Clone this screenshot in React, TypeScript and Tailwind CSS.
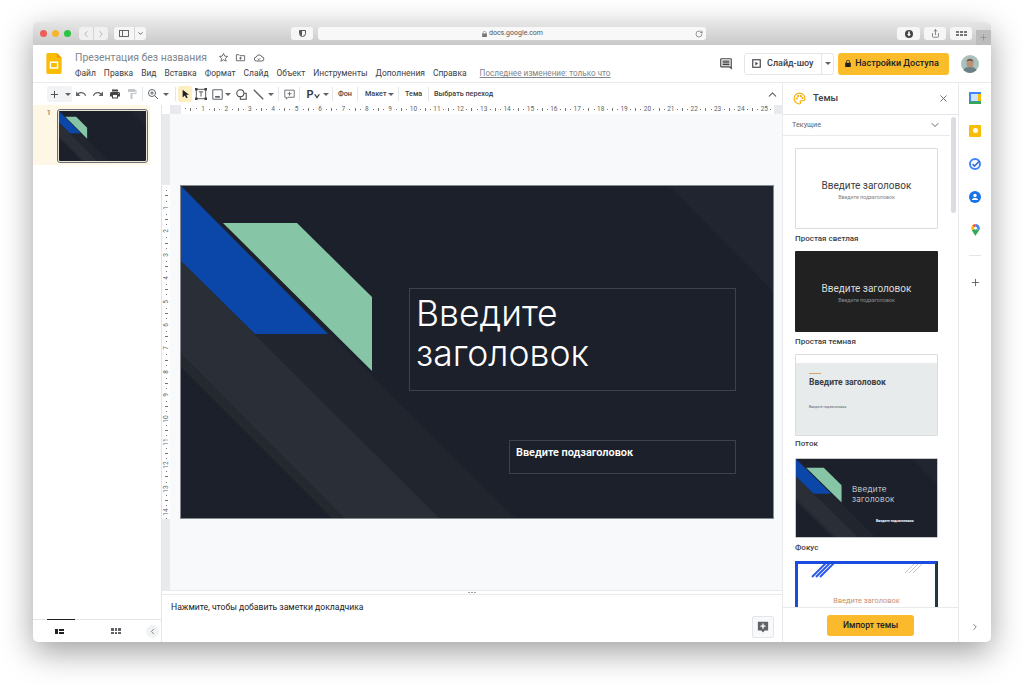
import { ChevronDown, ChevronLeft, ChevronRight, ChevronUp, Plus, RotateCw, Share, X } from 'lucide-react';

const rulerH = Array.from({ length: 25 }, (_, i) => i + 1);
const rulerV = Array.from({ length: 14 }, (_, i) => i + 1);
const menu = ['Файл', 'Правка', 'Вид', 'Вставка', 'Формат', 'Слайд', 'Объект', 'Инструменты', 'Дополнения', 'Справка'];

function Caret({ className = '' }: { className?: string }) {
  return (
    <svg viewBox="0 0 8 4" className={`h-[3px] w-[6px] shrink-0 text-[#5f6368] ${className}`} fill="currentColor">
      <path d="M0 0h8L4 4z" />
    </svg>
  );
}

function Sep({ className = '' }: { className?: string }) {
  return <div className={`h-[14px] w-px shrink-0 bg-[#e3e5e8] ${className}`} />;
}

function Mi({ d, className = '' }: { d: string; className?: string }) {
  return (
    <svg viewBox="0 0 24 24" className={`h-[12px] w-[12px] text-[#5f6368] ${className}`} fill="currentColor">
      <path d={d} />
    </svg>
  );
}

function SlideArt() {
  return (
    <svg viewBox="0 0 594 334" preserveAspectRatio="none" className="block h-full w-full">
      <rect width="594" height="334" fill="#1b202b" />
      <polygon points="488,0 594,0 594,107" fill="#21252f" />
      <polygon points="0,0 336,334 153,334 0,181" fill="#21252e" />
      <polygon points="0,75 260,334 165,334 0,168" fill="#2a2e37" />
      <polygon points="0,168 165,334 153,334 0,181" fill="#24282f" />
      <polygon points="0,0 148,149 75,149 0,75" fill="#0b47a8" />
      <polygon points="43,38 117,38 192,112 192,186" fill="#86c6a6" />
    </svg>
  );
}

function ThemeLabel({ children, className = '' }: { children: string; className?: string }) {
  return <div className={`h-[14px] text-[8px] leading-[14px] font-medium text-[#3c4043] ${className}`}>{children}</div>;
}

function AppTile({ children }: { children: React.ReactNode }) {
  return <div className="flex h-[33px] w-full shrink-0 items-center justify-center">{children}</div>;
}

export default function App() {
  return (
    <div className="h-[686px] w-[1024px] overflow-hidden bg-white pt-[22px] pl-[33px] font-['Roboto',sans-serif]">
      <div className="flex h-[620px] w-[958px] flex-col overflow-hidden rounded-[5px] bg-white shadow-[0_10px_32px_rgba(0,0,0,0.38)]">
        {/* safari bar */}
        <div className="flex h-[23px] shrink-0 items-center bg-gradient-to-b from-[#e6e6e6] to-[#c9c9c9] pl-[7px]">
          <div className="flex gap-[5px]">
            <div className="h-[7px] w-[7px] rounded-full bg-[#ee5f57]" />
            <div className="h-[7px] w-[7px] rounded-full bg-[#f7b52f]" />
            <div className="h-[7px] w-[7px] rounded-full bg-[#2bc33f]" />
          </div>
          <div className="ml-[8px] flex h-[13px] w-[29px] rounded-[3px] bg-[#f0f0f0] text-[#a9a9a9]">
            <div className="flex flex-1 items-center justify-center border-r border-[#d5d5d5]">
              <ChevronLeft size={10} />
            </div>
            <div className="flex flex-1 items-center justify-center">
              <ChevronRight size={10} />
            </div>
          </div>
          <div className="ml-[6px] flex h-[13px] w-[32px] rounded-[3px] bg-[#f6f6f6]">
            <div className="flex w-[21px] items-center justify-center border-r border-[#d5d5d5]">
              <div className="flex h-[7px] w-[10px] border border-[#666]">
                <div className="w-[3px] border-r border-[#666]" />
              </div>
            </div>
            <div className="flex flex-1 items-center justify-center text-[#555]">
              <ChevronDown size={7} strokeWidth={3} />
            </div>
          </div>
          <div className="ml-[145px] flex h-[13px] w-[22px] items-center justify-center rounded-[3px] bg-[#f6f6f6]">
            <div className="flex h-[7px] w-[7px] overflow-hidden rounded-b-full border border-[#555]">
              <div className="w-1/2 bg-[#555]" />
            </div>
          </div>
          <div className="ml-[5px] flex h-[13px] w-[388px] items-center rounded-[3px] bg-[#f8f8f8] pr-[3px] text-[#666]">
            <div className="flex flex-1 items-center justify-center gap-[2px] pl-[12px] text-[7px] text-[#555]">
              <svg viewBox="0 0 8 10" className="h-[6px] w-[5px]" fill="#777">
                <path d="M1 4V3a3 3 0 0 1 6 0v1h1v6H0V4zm1 0h4V3a2 2 0 0 0-4 0z" />
              </svg>
              <span>docs.google.com</span>
            </div>
            <RotateCw size={8} />
          </div>
          <div className="ml-[191px] flex h-[13px] w-[23px] items-center justify-center rounded-[3px] bg-[#f6f6f6]">
            <svg viewBox="0 0 10 10" className="h-[8px] w-[8px]">
              <circle cx="5" cy="5" r="5" fill="#444" />
              <path d="M4 2h2v3h1.5L5 8 2.5 5H4z" fill="#fff" />
            </svg>
          </div>
          <div className="ml-[4px] flex h-[13px] w-[22px] items-center justify-center rounded-[3px] bg-[#f6f6f6] text-[#666]">
            <Share size={9} />
          </div>
          <div className="ml-[4px] flex h-[13px] w-[22px] items-center justify-center rounded-[3px] bg-[#f6f6f6]">
            <div className="grid grid-cols-3 gap-px">
              {[0, 1, 2, 3, 4, 5].map((i) => (
                <div key={i} className="h-[2px] w-[3px] border-[0.5px] border-[#777]" />
              ))}
            </div>
          </div>
          <div className="mt-[8px] ml-[4px] flex h-[15px] flex-1 items-center justify-center bg-[#bdbdbd] text-[#8c8c8c]">
            <Plus size={9} />
          </div>
        </div>

        {/* docs header */}
        <div className="flex h-[38px] shrink-0 border-b border-[#e8eaed] bg-white">
          <div className="ml-[13px] pt-[8px]">
            <svg viewBox="0 0 16 22" className="h-[21px] w-[16px]">
              <path d="M1.5 0H11l5 5v15.5a1.5 1.5 0 0 1-1.5 1.5h-13A1.5 1.5 0 0 1 0 20.5v-19A1.5 1.5 0 0 1 1.5 0z" fill="#fbbc04" />
              <path d="M11 0l5 5h-5z" fill="#f29900" />
              <path d="M3.5 9h9v7.500h-9zM5 10.5V15h6v-4.500z" fill="#fff" />
            </svg>
          </div>
          <div className="ml-[13px] flex flex-col">
            <div className="mt-[5px] flex h-[15px] items-center">
              <span className="text-[10.4px] text-[#80868b]">Презентация без названия</span>
              <svg viewBox="0 0 24 24" className="ml-[11px] h-[11px] w-[11px]" fill="none" stroke="#5f6368" strokeWidth="2">
                <path d="M12 3l2.700 6 6.300.6-4.800 4.200 1.500 6.400L12 16.800 6.300 20.200l1.500-6.400L3 9.600 9.300 9z" />
              </svg>
              <svg viewBox="0 0 24 24" className="ml-[6px] h-[11px] w-[11px]" fill="none" stroke="#5f6368" strokeWidth="2">
                <path d="M3 6h6l2 2h10v11H3zM12 10.500v6M9 13.500h6" />
              </svg>
              <svg viewBox="0 0 24 24" className="ml-[7px] h-[12px] w-[12px]" fill="none" stroke="#5f6368" strokeWidth="2">
                <path d="M7 18a4 4 0 0 1-.5-8 6 6 0 0 1 11.400 0A4 4 0 0 1 17.500 18zM9.500 13.500l2 2 3-3" />
              </svg>
            </div>
            <div className="mt-[3px] flex h-[11px] items-center whitespace-nowrap text-[8.45px] text-[#3c4043]">
              {menu.map((m) => (
                <span key={m} className="mr-[8px]">
                  {m}
                </span>
              ))}
              <span className="ml-[5px] text-[8.15px] text-[#80868b] underline">Последнее изменение: только что</span>
            </div>
          </div>
          <div className="ml-auto flex items-center pr-[12px]">
            <Mi d="M21.990 4a2 2 0 0 0-2-2H4a2 2 0 0 0-2 2v12a2 2 0 0 0 2 2h14l4 4zM20 4v13.170L18.830 16H4V4zM6 12h12v2H6zm0-3h12v2H6zm0-3h12v2H6z" className="h-[14px] w-[14px] text-[#444]" />
            <div className="ml-[11px] flex h-[22px] w-[90px] rounded-[3px] border border-[#e3e5e8]">
              <div className="flex flex-1 items-center gap-[6px] pl-[7px] text-[9px] font-medium text-[#3c4043]">
                <svg viewBox="0 0 12 12" className="h-[9px] w-[9px]" fill="none" stroke="#3c4043" strokeWidth="1.5">
                  <rect x="1" y="1" width="10" height="10" />
                  <path d="M4.5 3.5L8 6 4.5 8.5z" fill="#3c4043" stroke="none" />
                </svg>
                Слайд-шоу
              </div>
              <div className="flex w-[12px] items-center justify-center border-l border-[#e3e5e8]">
                <Caret className="text-[#3c4043]" />
              </div>
            </div>
            <div className="ml-[4px] flex h-[22px] w-[111px] items-center justify-center gap-[4px] rounded-[3px] bg-[#fbbc2c] pr-[3px] text-[9px] font-medium text-[#202124]">
              <svg viewBox="0 0 8 10" className="h-[7px] w-[6px]" fill="#202124">
                <path d="M1 4V3a3 3 0 0 1 6 0v1h1v6H0V4zm1 0h4V3a2 2 0 0 0-4 0z" />
              </svg>
              Настройки Доступа
            </div>
            <div className="ml-[12px] h-[18px] w-[18px] overflow-hidden rounded-full">
              <svg viewBox="0 0 18 18" className="h-full w-full">
                <rect width="18" height="18" fill="#a9c1bc" />
                <path d="M2 18c0-5 3-6 7-6s7 1 7 6z" fill="#6b7f86" />
                <ellipse cx="9" cy="8" rx="3.5" ry="4.5" fill="#b98f76" />
                <path d="M5.5 6.5C6 3 12 3 12.500 6.500 10 5 8 5 5.500 6.500z" fill="#5b4a3e" />
              </svg>
            </div>
          </div>
        </div>

        <div className="flex min-h-0 flex-1">
          {/* left + editor */}
          <div className="flex w-[749px] shrink-0 flex-col">
            {/* toolbar */}
            <div className="flex h-[22px] shrink-0 items-center pl-[14px] text-[7.2px] font-medium text-[#3c4043]">
              <div className="flex h-[16px] w-[25px] shrink-0 items-center rounded-[2px] bg-[#f1f3f4]">
                <Plus size={11} strokeWidth={2} className="ml-[2px] text-[#444]" />
                <Caret className="ml-[5px]" />
              </div>
              <div className="flex w-[17px] justify-center">
                <Mi d="M12.500 8c-2.650 0-5.050.99-6.900 2.600L2 7v9h9l-3.620-3.620c1.390-1.160 3.160-1.880 5.120-1.880 3.540 0 6.550 2.310 7.600 5.500l2.370-.78C21.080 11.030 17.150 8 12.500 8z" />
              </div>
              <div className="flex w-[17px] justify-center">
                <Mi d="M18.400 10.600C16.550 8.990 14.150 8 11.500 8c-4.650 0-8.580 3.030-9.960 7.220L3.900 16c1.050-3.190 4.050-5.500 7.600-5.500 1.950 0 3.730.72 5.120 1.880L13 16h9V7l-3.600 3.600z" />
              </div>
              <div className="flex w-[17px] justify-center">
                <Mi d="M19 8H5c-1.660 0-3 1.340-3 3v6h4v4h12v-4h4v-6c0-1.660-1.340-3-3-3zm-3 11H8v-5h8v5zm3-7c-.55 0-1-.45-1-1s.45-1 1-1 1 .45 1 1-.45 1-1 1zm-1-9H6v4h12V3z" className="text-[#444]" />
              </div>
              <div className="flex w-[17px] justify-center">
                <Mi d="M18 4V3a1 1 0 0 0-1-1H5a1 1 0 0 0-1 1v4a1 1 0 0 0 1 1h12a1 1 0 0 0 1-1V6h1v4H9v11a1 1 0 0 0 1 1h2a1 1 0 0 0 1-1v-9h8V4z" className="text-[#c4c7c9]" />
              </div>
              <Sep className="mx-[2px]" />
              <div className="flex w-[16px] justify-center">
                <svg viewBox="0 0 24 24" className="h-[12px] w-[12px]" fill="none" stroke="#5f6368" strokeWidth="2">
                  <circle cx="10" cy="10" r="7" />
                  <path d="M15.500 15.500L22 22M10 6.500v7M6.500 10h7" />
                </svg>
              </div>
              <div className="flex w-[10px] justify-center">
                <Caret />
              </div>
              <Sep className="ml-[4px]" />
              <div className="ml-[2px] flex h-[16px] w-[14px] shrink-0 items-center justify-center rounded-[2px] bg-[#feefc3]">
                <svg viewBox="0 0 12 14" className="h-[10px] w-[9px]" fill="#202124">
                  <path d="M2 1v11l3-3 2 4 2-1-2-4h4z" />
                </svg>
              </div>
              <div className="flex w-[18px] justify-center">
                <svg viewBox="0 0 14 14" className="h-[12px] w-[12px]" fill="none" stroke="#444" strokeWidth="1">
                  <rect x="1.5" y="1.5" width="11" height="11" />
                  <path d="M4.500 4.500h5M7 4.500v5.500" />
                  <path d="M0 0h3v3H0zM11 0h3v3h-3zM0 11h3v3H0zM11 11h3v3h-3z" fill="#444" stroke="none" />
                </svg>
              </div>
              <div className="flex w-[14px] justify-center">
                <svg viewBox="0 0 14 14" className="h-[11px] w-[11px]" fill="none" stroke="#5f6368" strokeWidth="1.3">
                  <rect x="1" y="1" width="12" height="12" rx="1" />
                  <path d="M4 10h6" strokeWidth="2" />
                </svg>
              </div>
              <Caret className="ml-[1px]" />
              <div className="ml-[2px] flex w-[16px] justify-center">
                <svg viewBox="0 0 14 14" className="h-[11px] w-[11px]" fill="none" stroke="#444" strokeWidth="1.3">
                  <circle cx="5.5" cy="5.5" r="4.5" />
                  <path d="M10.500 5.500H13v7.500H5.500v-3" />
                </svg>
              </div>
              <div className="ml-[1px] flex w-[16px] justify-center">
                <svg viewBox="0 0 14 14" className="h-[11px] w-[11px]" fill="none" stroke="#5f6368" strokeWidth="1.8">
                  <path d="M1 1l12 12" />
                </svg>
              </div>
              <Caret className="ml-[2px]" />
              <Sep className="ml-[4px]" />
              <div className="ml-[2px] flex w-[16px] justify-center">
                <svg viewBox="0 0 14 14" className="h-[11px] w-[11px]" fill="none" stroke="#5f6368" strokeWidth="1.1">
                  <path d="M1 1.500h12v9H5L3 13v-2.500H1zM7 3.500v5M4.500 6h5" />
                </svg>
              </div>
              <Sep className="ml-[2px]" />
              <div className="ml-[5px] flex w-[16px] items-end justify-center">
                <span className="text-[11px] leading-none font-bold text-[#3c4043]">P</span>
                <svg viewBox="0 0 8 6" className="mb-[1px] h-[5px] w-[6px]" fill="#3c4043">
                  <path d="M0 0h2l2 3 2-3h2L4 6z" />
                </svg>
              </div>
              <Caret className="ml-[2px]" />
              <Sep className="ml-[3px]" />
              <span className="ml-[5px] w-[14px] shrink-0 whitespace-nowrap">Фон</span>
              <Sep className="ml-[5px]" />
              <span className="ml-[7px] w-[22px] shrink-0 whitespace-nowrap">Макет</span>
              <Caret className="ml-[1px]" />
              <Sep className="ml-[4px]" />
              <span className="ml-[6px] w-[17px] shrink-0 whitespace-nowrap">Тема</span>
              <Sep className="ml-[6px]" />
              <span className="ml-[5px] whitespace-nowrap">Выбрать переход</span>
              <ChevronUp size={13} strokeWidth={2} className="mr-[3px] ml-auto text-[#5f6368]" />
            </div>

            <div className="flex min-h-0 flex-1">
              {/* filmstrip */}
              <div className="flex w-[129px] shrink-0 flex-col border-r border-[#e3e5e8]">
                <div className="flex h-[60px] w-[117px] bg-[#fef7e6]">
                  <span className="mt-[2px] w-[19px] pr-[1px] text-right text-[8px] leading-[12px] text-[#5f6368]">1</span>
                  <div className="mt-[5px] ml-[6px] h-[52px] w-[89px] overflow-hidden rounded-[2px] border border-[#e7e3d5] outline outline-[#6b6f76]">
                    <SlideArt />
                  </div>
                </div>
                <div className="flex-1" />
                <div className="relative flex h-[23px] shrink-0 items-center border-t border-[#e3e5e8]">
                  <div className="absolute top-[-1px] left-[14px] h-[1px] w-[28px] bg-[#202124]" />
                  <div className="ml-[22px] flex h-[5px] w-[9px] gap-px">
                    <div className="w-[3px] bg-[#202124]" />
                    <div className="flex flex-1 flex-col gap-px">
                      <div className="flex-1 bg-[#202124]" />
                      <div className="flex-1 bg-[#202124]" />
                    </div>
                  </div>
                  <div className="ml-[47px] grid grid-cols-3 gap-px">
                    {[0, 1, 2, 3, 4, 5].map((i) => (
                      <div key={i} className="h-[2.5px] w-[2.5px] bg-[#5f6368]" />
                    ))}
                  </div>
                  <div className="ml-[25px] flex h-[13px] w-[13px] items-center justify-center rounded-full bg-[#f1f3f4] text-[#5f6368]">
                    <ChevronLeft size={9} />
                  </div>
                </div>
              </div>

              {/* editor */}
              <div className="flex min-w-0 flex-1 flex-col">
                <div className="flex h-[9px] shrink-0 bg-[#e8eaed]">
                  <div className="w-[8px] shrink-0 bg-white" />
                  <div className="ml-[11px] flex h-[9px] w-[593px] shrink-0 items-center overflow-hidden bg-white pl-[2px] text-[6.5px] leading-none text-[#5f6368]">
                    <div className="flex w-[16px] shrink-0 justify-around">
                      <div className="h-px w-px bg-[#777]" />
                      <div className="h-[3px] w-px bg-[#777]" />
                      <div className="h-px w-px bg-[#777]" />
                    </div>
                    {rulerH.map((n) => (
                      <div key={n} className="flex h-full w-[23.4px] shrink-0 items-center">
                        <span className="w-[8px] text-center">{n}</span>
                        <div className="flex flex-1 items-center justify-around">
                          <div className="h-px w-px bg-[#777]" />
                          <div className="h-[3px] w-px bg-[#777]" />
                          <div className="h-px w-px bg-[#777]" />
                        </div>
                      </div>
                    ))}
                  </div>
                </div>
                <div className="flex min-h-0 flex-1">
                  <div className="flex w-[8px] shrink-0 flex-col bg-[#e8eaed]">
                    <div className="mt-[71px] flex h-[334px] shrink-0 flex-col items-center overflow-hidden bg-white pt-[3px] text-[6.5px] leading-none text-[#5f6368]">
                      <div className="flex h-[16px] shrink-0 flex-col items-center justify-around">
                        <div className="h-px w-px bg-[#777]" />
                        <div className="h-px w-[3px] bg-[#777]" />
                        <div className="h-px w-px bg-[#777]" />
                      </div>
                      {rulerV.map((n) => (
                        <div key={n} className="flex h-[23.4px] shrink-0 flex-col items-center">
                          <span className="flex h-[8px] shrink-0 -rotate-90 items-center">{n}</span>
                          <div className="flex flex-1 flex-col items-center justify-around">
                            <div className="h-px w-px bg-[#777]" />
                            <div className="h-px w-[3px] bg-[#777]" />
                            <div className="h-px w-px bg-[#777]" />
                          </div>
                        </div>
                      ))}
                    </div>
                  </div>
                  <div className="min-w-0 flex-1 bg-[#f8f9fa] pt-[71px] pl-[10px]">
                    <div className="relative h-[334px] w-[594px]">
                      <SlideArt />
                      <div className="absolute inset-0 border border-[#85888e]" />
                      <div className="absolute top-[103px] left-[229px] h-[103px] w-[327px] border border-[#3d414c] px-[6px] pt-[5px] font-['Inter',sans-serif] text-[35.5px] leading-[40px] font-light text-white">
                        Введите
                        <br />
                        заголовок
                      </div>
                      <div className="absolute top-[255px] left-[329px] h-[34px] w-[227px] border border-[#3d414c] px-[6px] pt-[4px] text-[10.9px] leading-[16px] font-semibold text-white">
                        Введите подзаголовок
                      </div>
                    </div>
                  </div>
                </div>
                <div className="flex h-[5px] shrink-0 items-center justify-center gap-px border-y border-[#e8eaed]">
                  <div className="h-px w-[2px] bg-[#9aa0a6]" />
                  <div className="h-px w-[2px] bg-[#9aa0a6]" />
                  <div className="h-px w-[2px] bg-[#9aa0a6]" />
                </div>
                <div className="relative h-[47px] shrink-0 pt-[5px] pl-[9px] text-[8.6px] leading-[14px] text-[#202124]">
                  Нажмите, чтобы добавить заметки докладчика
                  <div className="absolute top-[21px] right-[8px] flex h-[22px] w-[22px] items-center justify-center rounded-[2px] border border-[#e3e5e8] bg-[#f8f9fa]">
                    <svg viewBox="0 0 14 14" className="h-[12px] w-[12px]" fill="#5f6368">
                      <path d="M1 1h12v10H9l-2 2.500L5 11H1z" />
                      <path d="M6.200 3h1.600v2.200H10v1.600H7.800V9H6.200V6.800H4V5.200h2.200z" fill="#fff" />
                    </svg>
                  </div>
                </div>
              </div>
            </div>
          </div>

          {/* themes panel */}
          <div className="flex w-[176px] shrink-0 flex-col border-l border-[#e8eaed]">
            <div className="flex h-[32px] shrink-0 items-center border-b border-[#e3e5e8] pr-[9px] pl-[10px]">
              <svg viewBox="0 0 24 24" className="h-[13px] w-[13px]" fill="none" stroke="#f9ab00" strokeWidth="2">
                <path d="M12 2a10 10 0 0 0 0 20c1.500 0 2-1 2-2s-1-1.500-1-2.500 1-1.500 2-1.500h3c2 0 4-1.500 4-4 0-5.500-4.500-10-10-10z" />
                <circle cx="7" cy="12" r="1" fill="#f9ab00" />
                <circle cx="9.5" cy="7.5" r="1" fill="#f9ab00" />
                <circle cx="14.5" cy="7.5" r="1" fill="#f9ab00" />
                <circle cx="17.5" cy="11" r="1" fill="#f9ab00" />
              </svg>
              <span className="ml-[7px] text-[9.5px] font-medium text-[#3c4043]">Темы</span>
              <X size={11} strokeWidth={2} className="ml-auto text-[#5f6368]" />
            </div>
            <div className="relative min-h-0 flex-1 overflow-hidden">
              <div className="mr-[8px] flex h-[21px] items-center justify-between border-b border-[#e8eaed] pr-[9px] pl-[9px] text-[7.2px] text-[#5f6368]">
                Текущие
                <ChevronDown size={12} strokeWidth={2} className="text-[#5f6368]" />
              </div>
              <div className="absolute top-[2px] right-[2px] h-[96px] w-[5px] rounded-full bg-[#dadce0]" />
              <div className="ml-[12px] w-[143px] pt-[12px]">
                <div className="flex h-[81px] flex-col items-center justify-center rounded-[1px] border border-[#dadce0] bg-white pt-[4px]">
                  <span className="text-[10px] leading-[12px] text-[#3c4043]">Введите заголовок</span>
                  <span className="mt-[1px] text-[5.3px] leading-[8px] text-[#80868b]">Введите подзаголовок</span>
                </div>
                <ThemeLabel className="mt-[3px] mb-[5px]">Простая светлая</ThemeLabel>
                <div className="flex h-[81px] flex-col items-center justify-center rounded-[1px] bg-[#212121] pt-[4px]">
                  <span className="text-[10px] leading-[12px] text-[#dcdcdc]">Введите заголовок</span>
                  <span className="mt-[1px] text-[5.3px] leading-[8px] text-[#8b8b8b]">Введите подзаголовок</span>
                </div>
                <ThemeLabel className="mt-[3px] mb-[5px]">Простая темная</ThemeLabel>
                <div className="h-[82px] overflow-hidden rounded-[1px] border border-[#dadce0] bg-[#e8ebeb] pl-[13px]">
                  <div className="-ml-[13px] h-[8px] bg-white" />
                  <div className="mt-[10px] h-px w-[12px] bg-[#d6a274]" />
                  <div className="mt-[3px] text-[8.5px] leading-[11px] font-bold text-[#3c4043]">Введите заголовок</div>
                  <div className="mt-[16px] text-[3.5px] leading-[6px] text-[#5f6368]">Введите подзаголовок</div>
                </div>
                <ThemeLabel className="mt-px mb-[7px]">Поток</ThemeLabel>
                <div className="relative h-[80px] overflow-hidden rounded-[1px] border border-[#c6c8cc]">
                  <SlideArt />
                  <div className="absolute top-[25px] left-[56px] font-['Inter',sans-serif] text-[8.2px] leading-[10px] font-light tracking-[0.3px] text-[#e8e8e8]">
                    Введите
                    <br />
                    заголовок
                  </div>
                  <div className="absolute top-[60px] left-[80px] text-[3.5px] leading-[5px] font-bold text-white">Введите подзаголовок</div>
                </div>
                <ThemeLabel className="mt-[3px] mb-[6px]">Фокус</ThemeLabel>
                <div className="relative h-[81px] overflow-hidden border-[3px] border-[#1c4be0] border-r-[#1f3a3d] bg-white">
                  <svg viewBox="0 0 143 46" className="absolute top-[-3px] left-[-3px] h-[46px] w-[143px]" fill="none">
                    <path d="M82 1.500h61" stroke="#1f3a3d" strokeWidth="3" />
                    <path d="M17 16L33 0M21 16L37 0M25 16L41 0" stroke="#2d5be8" strokeWidth="2" />
                    <path d="M110 12L122 0M114 12L126 0M118 12L130 0" stroke="#9a9a9a" strokeWidth="0.6" />
                  </svg>
                  <div className="absolute top-[31px] left-0 w-full text-center text-[7.4px] leading-[12px] text-[#c9906a]">Введите заголовок</div>
                  <div className="absolute top-[28px] right-[-3px] h-[30px] w-[3px] bg-[#b98f5f]" />
                </div>
              </div>
            </div>
            <div className="flex h-[35px] shrink-0 items-center justify-center border-t border-[#e8eaed] bg-white">
              <div className="flex h-[21px] w-[87px] items-center justify-center rounded-[3px] bg-[#fbb92c] text-[8.6px] font-medium text-[#202124]">
                Импорт темы
              </div>
            </div>
          </div>

          {/* addons rail */}
          <div className="flex w-[33px] shrink-0 flex-col items-center border-l border-[#e8eaed]">
            <div className="-mt-[2px] w-full">
              <AppTile>
                <svg viewBox="0 0 12 12" className="h-[12px] w-[12px]">
                  <rect width="12" height="12" fill="#4285f4" />
                  <rect x="2" y="2" width="7" height="7" fill="#d2e3fc" />
                  <rect x="9" y="2" width="3" height="7" fill="#fbbc04" />
                  <rect y="9.5" width="12" height="2.5" fill="#34a853" />
                </svg>
              </AppTile>
            </div>
            <AppTile>
              <div className="flex h-[12px] w-[12px] items-center justify-center rounded-[1px] bg-[#fbbc04]">
                <div className="h-[5px] w-[5px] rounded-full bg-white" />
              </div>
            </AppTile>
            <AppTile>
              <svg viewBox="0 0 12 12" className="h-[12px] w-[12px]">
                <circle cx="6" cy="6" r="5" fill="none" stroke="#4285f4" strokeWidth="2" />
                <path d="M3.5 6l2 2 5-5" fill="none" stroke="#3367d6" strokeWidth="1.6" />
              </svg>
            </AppTile>
            <AppTile>
              <svg viewBox="0 0 12 12" className="h-[12px] w-[12px]">
                <circle cx="6" cy="6" r="6" fill="#1a73e8" />
                <circle cx="6" cy="4.500" r="1.700" fill="#fff" />
                <path d="M2.800 9c.5-1.500 1.700-2 3.200-2s2.700.5 3.200 2z" fill="#fff" />
              </svg>
            </AppTile>
            <AppTile>
              <svg viewBox="0 0 10 14" className="h-[12px] w-[9px]">
                <path d="M5 0a5 5 0 0 1 5 5c0 1-.3 1.800-.8 2.500L5 4z" fill="#4285f4" />
                <path d="M5 0a5 5 0 0 0-3.800 1.800L5 5z" fill="#ea4335" />
                <path d="M1.200 1.800A5 5 0 0 0 .8 7.500L5 5z" fill="#fbbc04" />
                <path d="M.8 7.500L5 14c1-2.500 2.800-4.500 4.200-6.500L5 5z" fill="#34a853" />
                <circle cx="5" cy="5" r="1.700" fill="#fff" />
              </svg>
            </AppTile>
            <div className="mt-[9px] h-px w-[12px] bg-[#e3e5e8]" />
            <div className="mt-[18px] flex h-[16px] items-center">
              <Plus size={11} className="text-[#5f6368]" />
            </div>
            <div className="mt-auto mb-[10px]">
              <ChevronRight size={10} strokeWidth={2} className="text-[#5f6368]" />
            </div>
          </div>
        </div>
      </div>
    </div>
  );
}
